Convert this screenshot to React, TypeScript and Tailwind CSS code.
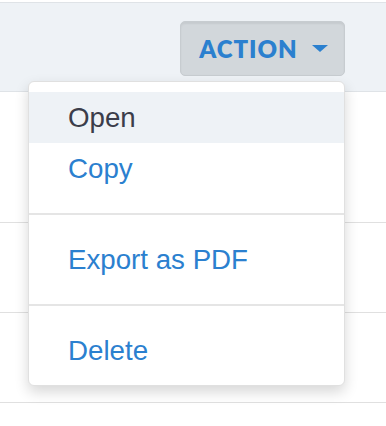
import * as React from "react"

const items = [
  { label: "Open", active: true },
  { label: "Copy" },
  { divider: true },
  { label: "Export as PDF" },
  { divider: true },
  { label: "Delete" },
]

function Caret() {
  return (
    <svg width="16" height="7" viewBox="0 0 16 7" className="fill-current">
      <path d="M0 0h16L8 7z" />
    </svg>
  )
}

export default function App() {
  return (
    <div className="w-[386px] h-[426px] bg-white pt-[2px] font-['Liberation_Sans',Arial,sans-serif] overflow-hidden">
      <div className="h-[90px] bg-[#eef2f6] border-y border-[#dfe3e7] flex justify-end items-start pr-[41px] pt-[18px]">
        <div className="relative">
          <button className="w-[165px] h-[55px] rounded-[5px] bg-[#d2d7db] border border-[#c7ccd0] shadow-[inset_0_2px_2px_rgba(0,0,0,0.06)] flex items-center justify-center gap-[14px] pl-[2px] text-[#2b80cf]">
            <span className="font-['Lato',sans-serif] font-extrabold text-[24px] tracking-[1px] leading-none">ACTION</span>
            <Caret />
          </button>

          <div className="absolute right-0 top-[60px] w-[317px] bg-white border border-[#e0e0e0] rounded-[6px] shadow-[0_6px_14px_rgba(0,0,0,0.16)] pt-[10px] pb-[9px] z-10">
            {items.map((item, i) =>
              item.divider ? (
                <div key={i} className="h-[2px] bg-[#e5e5e5] my-[19px]" />
              ) : (
                <div
                  key={i}
                  className={
                    "h-[51px] flex items-center pl-[39px] text-[27.7px] " +
                    (item.active ? "bg-[#eef2f6] text-[#3b3d4a]" : "text-[#2b80cf]")
                  }
                >
                  {item.label}
                </div>
              )
            )}
          </div>
        </div>
      </div>
      <div className="h-[131px] border-b border-[#e0e0e0]" />
      <div className="h-[90px] border-b border-[#e0e0e0]" />
      <div className="h-[90px] border-b border-[#e0e0e0]" />
    </div>
  )
}
